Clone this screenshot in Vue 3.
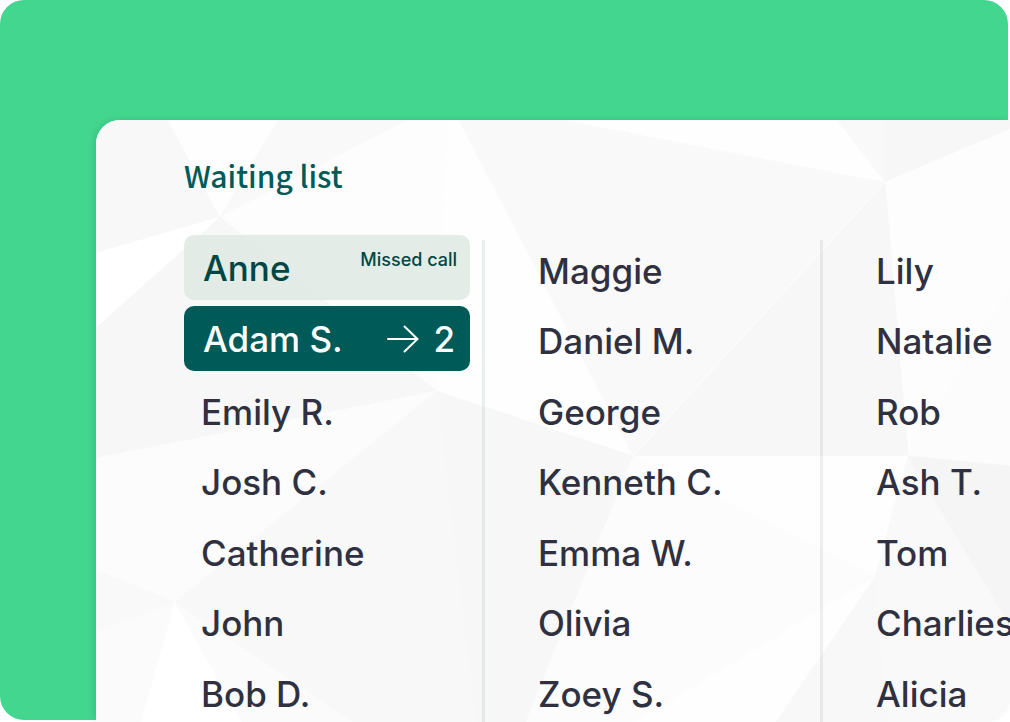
<script setup>
const facets = [
  { points: '96,120 168,120 220,217 96,253', fill: '#f8f8f8' },
  { points: '168,120 278,120 220,217', fill: '#fefefe' },
  { points: '278,120 408,120 220,217', fill: '#f9f9f9' },
  { points: '408,120 448,120 443,230 437,391 220,217', fill: '#fdfdfd' },
  { points: '448,120 459,120 633,456 437,391 443,230', fill: '#fefefe' },
  { points: '96,253 220,217 96,328', fill: '#ffffff' },
  { points: '96,328 220,217 437,391 96,458', fill: '#f7f7f7' },
  { points: '96,458 437,391 175,602 96,570', fill: '#fcfcfc' },
  { points: '96,570 175,602 96,632', fill: '#f9f9f9' },
  { points: '96,632 175,602 141,722 96,722', fill: '#fbfbfb' },
  { points: '141,722 175,602 242,722', fill: '#ffffff' },
  { points: '242,722 175,602 353,722', fill: '#fbfbfb' },
  { points: '353,722 175,602 437,391 477,722', fill: '#f8f8f8' },
  { points: '477,722 437,391 633,456 526,722', fill: '#f7f7f7' },
  { points: '459,120 565,120 885,182 633,456', fill: '#f9f9f9' },
  { points: '565,120 837,120 885,182', fill: '#fefefe' },
  { points: '837,120 885,120 885,182', fill: '#f9f9f9' },
  { points: '885,120 1010,120 1010,129 885,182', fill: '#f7f7f7' },
  { points: '885,182 1010,129 1010,289 908,456', fill: '#fdfdfd' },
  { points: '1010,289 1010,466 908,456', fill: '#fcfcfc' },
  { points: '885,182 908,456 633,456', fill: '#f7f7f7' },
  { points: '633,456 908,456 875,577', fill: '#fefefe' },
  { points: '633,456 875,577 636,722 526,722', fill: '#fcfcfc' },
  { points: '636,722 875,577 776,722', fill: '#fefefe' },
  { points: '776,722 875,577 888,722', fill: '#f8f8f8' },
  { points: '888,722 875,577 908,456 1010,625 1010,722', fill: '#f9f9f9' },
  { points: '908,456 1010,466 1010,625', fill: '#f5f5f5' },
]
const waiting = ['Emily R.', 'Josh C.', 'Catherine', 'John', 'Bob D.']
const columns = [
  ['Maggie', 'Daniel M.', 'George', 'Kenneth C.', 'Emma W.', 'Olivia', 'Zoey S.'],
  ['Lily', 'Natalie', 'Rob', 'Ash T.', 'Tom', 'Charlies', 'Alicia'],
]
</script>

<template>
  <main class="stage">
    <div class="backdrop"></div>
    <section class="card" aria-labelledby="list-title">
      <svg class="facets" viewBox="96 120 914 602" preserveAspectRatio="xMinYMin slice" aria-hidden="true">
        <polygon v-for="f in facets" :key="f.points" :points="f.points" :fill="f.fill" :stroke="f.fill" stroke-width="0.5" />
        <path d="M885 182 633 456" stroke="#fff" stroke-width="1" />
      </svg>
      <div class="content">
        <h1 id="list-title">Waiting list</h1>
        <div class="columns">
          <div class="column first">
            <ul class="called">
              <li class="pill missed">
                <span>Anne</span>
                <small>Missed call</small>
              </li>
              <li class="pill active">
                <span>Adam S.</span>
                <span class="room">
                  <svg width="32" height="28" viewBox="0 0 32 28" fill="none" stroke="#fff" stroke-width="2" stroke-linecap="round" aria-label="to room">
                    <path d="M1 14H30M17.5 1.5 30.5 14 17.5 26.5" />
                  </svg>
                  <span>2</span>
                </span>
              </li>
            </ul>
            <ul class="names">
              <li v-for="name in waiting" :key="name">{{ name }}</li>
            </ul>
          </div>
          <ul v-for="(names, i) in columns" :key="i" class="column names divided">
            <li v-for="name in names" :key="name">{{ name }}</li>
          </ul>
        </div>
      </div>
    </section>
  </main>
</template>

<style>
body {
  margin: 0;
  background: #fff;
}
</style>

<style scoped>
.stage {
  position: relative;
  box-sizing: border-box;
  display: flex;
  height: 100vh;
  padding: 120px 0 0 96px;
  overflow: hidden;
  font-family: Inter, "Liberation Sans", sans-serif;
  font-weight: 500;
  color: #2f3040;
}
.backdrop {
  position: absolute;
  inset: 0 2px 2px 0;
  border-radius: 24px;
  background: #43d68e;
}
.card {
  position: relative;
  flex: 1;
  min-width: 0;
  overflow: hidden;
  border-radius: 24px 0 24px 0;
  background: #fafafa;
  box-shadow: -3px -1px 6px -1px rgba(0, 90, 88, 0.18);
}
.facets {
  position: absolute;
  inset: 0;
  width: 100%;
  height: 100%;
}
.content {
  position: relative;
  padding: 33px 0 0 88px;
}
h1 {
  margin: 0;
  font-family: "Noto Sans CJK SC", "Noto Sans", sans-serif;
  font-size: 30px;
  line-height: 44px;
  font-weight: 500;
  color: #005a58;
}
ul {
  list-style: none;
  margin: 0;
  padding: 0;
}
.columns {
  display: grid;
  grid-template-columns: 298px 338px 338px;
  margin-top: 38px;
  font-size: 35px;
  white-space: nowrap;
}
.first {
  padding-right: 12px;
}
.called {
  display: grid;
  gap: 6px;
  margin-bottom: 10px;
}
.pill {
  box-sizing: border-box;
  display: flex;
  justify-content: space-between;
  align-items: center;
  height: 65px;
  padding: 0 13px 0 19px;
  border-radius: 10px;
}
.missed {
  background: rgba(222, 233, 227, 0.85);
  color: #004643;
}
.missed small {
  align-self: flex-start;
  margin-top: 14px;
  font-size: 18px;
  line-height: 22px;
}
.active {
  padding-right: 15px;
  background: #005a58;
  color: #fff;
}
.room {
  display: flex;
  align-items: center;
  gap: 14px;
}
.names {
  display: grid;
  grid-template-rows: 70px 71px 70px 71px 70px 71px 70px;
  line-height: 62px;
}
.first .names {
  padding-left: 17px;
}
.divided {
  margin-top: 5px;
  padding-left: 53px;
  border-left: 3px solid rgba(0, 60, 60, 0.08);
}
</style>
